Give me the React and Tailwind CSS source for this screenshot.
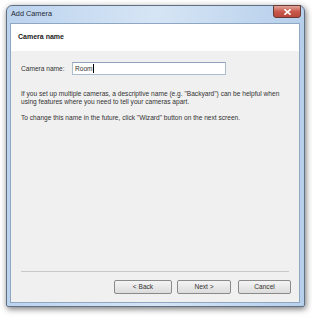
export default function App() {
  const font = { fontFamily: '"Liberation Sans", Arial, sans-serif' };

  return (
    <div className="w-[312px] h-[320px] bg-white pt-[5px] pl-[6px]" style={font}>
      {/* window frame */}
      <div className="relative w-[299px] h-[302px] rounded-t-[6px] rounded-b-[2px] border border-[#5f6f84] bg-gradient-to-r from-[#bcd3ee] via-[#d6e5f5] to-[#b6cfeb] shadow-[1px_2px_6px_rgba(0,0,0,0.55)] flex flex-col">
        {/* title bar */}
        <div className="h-[17px] flex items-center pl-[4px] text-[7.3px] text-[#1f2a36]">Add Camera</div>

        {/* close button */}
        <div className="absolute top-[-1px] right-[3px] w-[28px] h-[13px] rounded-b-[3px] border border-[#6a3a36] bg-gradient-to-b from-[#dfa49a] via-[#c9594c] to-[#b9483c] flex items-center justify-center">
          <svg width="7" height="6" viewBox="0 0 7 6">
            <path d="M1 0.8 L6 5.2 M6 0.8 L1 5.2" stroke="#ffffff" strokeWidth="1.6" strokeLinecap="square" />
          </svg>
        </div>

        {/* client area */}
        <div className="flex-1 ml-[3px] mr-[4px] mb-[3px] border border-[#8ea7c2] bg-[#f0f0f0] flex flex-col">
          <div className="h-[27px] bg-white flex items-center pl-[7px] text-[7px] font-bold text-[#1a1a1a]">Camera name</div>

          <div className="flex-1 pl-[10px] pr-[10px] pt-[11px] text-[6.6px] text-[#333] leading-[8px]">
            <div className="flex items-center">
              <span className="w-[51px]">Camera name:</span>
              <div className="w-[154px] h-[13px] bg-white border border-[#abbccf] border-t-[#8fa3ba] flex items-center pl-[2px]">
                <span>Room</span>
                <span className="w-px h-[9px] bg-black" />
              </div>
            </div>

            <p className="mt-[15px]">
              If you set up multiple cameras, a descriptive name (e.g. "Backyard") can be helpful when using features where you need to tell your cameras apart.
            </p>
            <p className="mt-[8px]">To change this name in the future, click "Wizard" button on the next screen.</p>
          </div>

          <div className="mx-[10px] h-px bg-[#c8c8c8]" />

          <div className="h-[30px] flex items-center justify-end gap-[5px] pr-[8px] pb-[1px] text-[6.6px] text-[#333]">
            <button className="w-[58px] h-[14px] rounded-[2px] border border-[#8a8a8a] bg-gradient-to-b from-[#f4f4f4] to-[#dcdcdc]">&lt; Back</button>
            <button className="w-[54px] h-[14px] rounded-[2px] border border-[#8a8a8a] bg-gradient-to-b from-[#f4f4f4] to-[#dcdcdc]">Next &gt;</button>
            <button className="ml-[2px] w-[53px] h-[14px] rounded-[2px] border border-[#8a8a8a] bg-gradient-to-b from-[#f4f4f4] to-[#dcdcdc]">Cancel</button>
          </div>
        </div>
      </div>
    </div>
  );
}
